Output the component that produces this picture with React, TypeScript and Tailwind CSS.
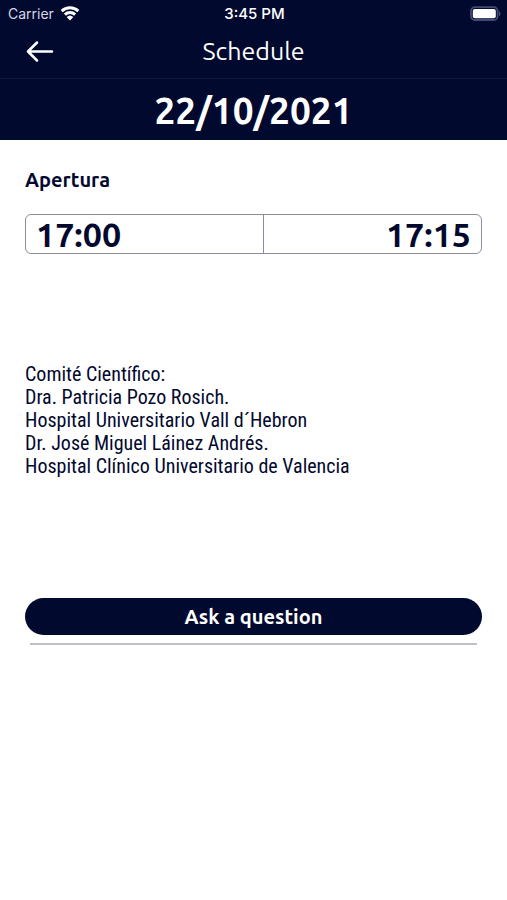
import { useState } from 'react';

const SESSION = {
  date: '22/10/2021',
  title: 'Apertura',
  start: '17:00',
  end: '17:15',
  details: [
    'Comité Científico:',
    'Dra. Patricia Pozo Rosich.',
    'Hospital Universitario Vall d´Hebron',
    'Dr. José Miguel Láinez Andrés.',
    'Hospital Clínico Universitario de Valencia',
  ],
};

function StatusBar() {
  return (
    <div className="grid h-7 grid-cols-3 items-center pl-2 pr-1.5 font-['Inter',sans-serif] text-[15px]">
      <div className="flex items-center gap-1.5 text-sm text-[#d5d7e3]">
        <span>Carrier</span>
        <svg className="h-4 w-5" viewBox="0 0 20 16" fill="none" stroke="white" strokeWidth="2.9">
          <path d="M1.7 5.1a12 12 0 0 1 16.6 0" />
          <path d="M4.9 8.6a7.3 7.3 0 0 1 10.2 0" />
          <path d="M10 14.4 6.7 11a4.8 4.8 0 0 1 6.6 0Z" fill="white" stroke="none" />
        </svg>
      </div>
      <span className="text-center font-medium">3:45 PM</span>
      <svg className="h-4 w-8 justify-self-end" viewBox="0 0 32 16" fill="none">
        <rect x="2" y="1.2" width="26.6" height="12.8" rx="3.8" stroke="#454a70" strokeWidth="1.8" />
        <rect x="3.8" y="3" width="23" height="9.2" rx="2" fill="white" />
        <path d="M30 5.2c2 .8 2 4 0 4.8Z" fill="#454a70" />
      </svg>
    </div>
  );
}

export default function App() {
  const [asking, setAsking] = useState(false);

  return (
    <div className="min-h-screen bg-white font-['Ubuntu','Noto_Sans',sans-serif] text-[#02082e]">
      <header className="bg-[#02092e] text-white">
        <StatusBar />
        <div className="grid h-[51px] grid-cols-[1fr_auto_1fr] items-center border-b border-[#10163a] px-6 pb-1">
          <button type="button" aria-label="Back" className="w-8">
            <svg className="h-8 w-8" viewBox="0 0 32 32" fill="none" stroke="white" strokeWidth="2.5" strokeLinecap="round" strokeLinejoin="round">
              <path d="M28 16.5H4M13 7.5l-9 9 9 9" />
            </svg>
          </button>
          <h1 className="text-[25px] leading-8">Schedule</h1>
        </div>
        <p className="flex h-[61px] items-center justify-center pt-0.5 text-[37px] font-bold">{SESSION.date}</p>
      </header>

      <main className="px-[25px] pt-7">
        <h2 className="text-xl font-bold leading-6">{SESSION.title}</h2>

        <div className="mt-[22px] grid h-10 grid-cols-[238fr_219fr] rounded-md border border-[#8d8c9e] text-[34px] font-bold leading-[38px]">
          <time className="pl-2.5">{SESSION.start}</time>
          <time className="border-l border-[#8d8c9e] pr-2.5 text-right">{SESSION.end}</time>
        </div>

        <div className="mt-[109px] font-['Roboto_Condensed','Liberation_Sans_Narrow',Roboto,sans-serif] text-xl leading-[23px]">
          {SESSION.details.map((line) => (
            <p key={line}>{line}</p>
          ))}
        </div>

        <button
          type="button"
          onClick={() => setAsking(!asking)}
          className="mt-[120px] flex h-[37px] w-full items-center justify-center rounded-full bg-[#02092e] text-xl font-bold text-white"
        >
          Ask a question
        </button>
        <hr className="mx-[5px] mt-2 border-t-2 border-[#c0c1c8]" />
      </main>
    </div>
  );
}
